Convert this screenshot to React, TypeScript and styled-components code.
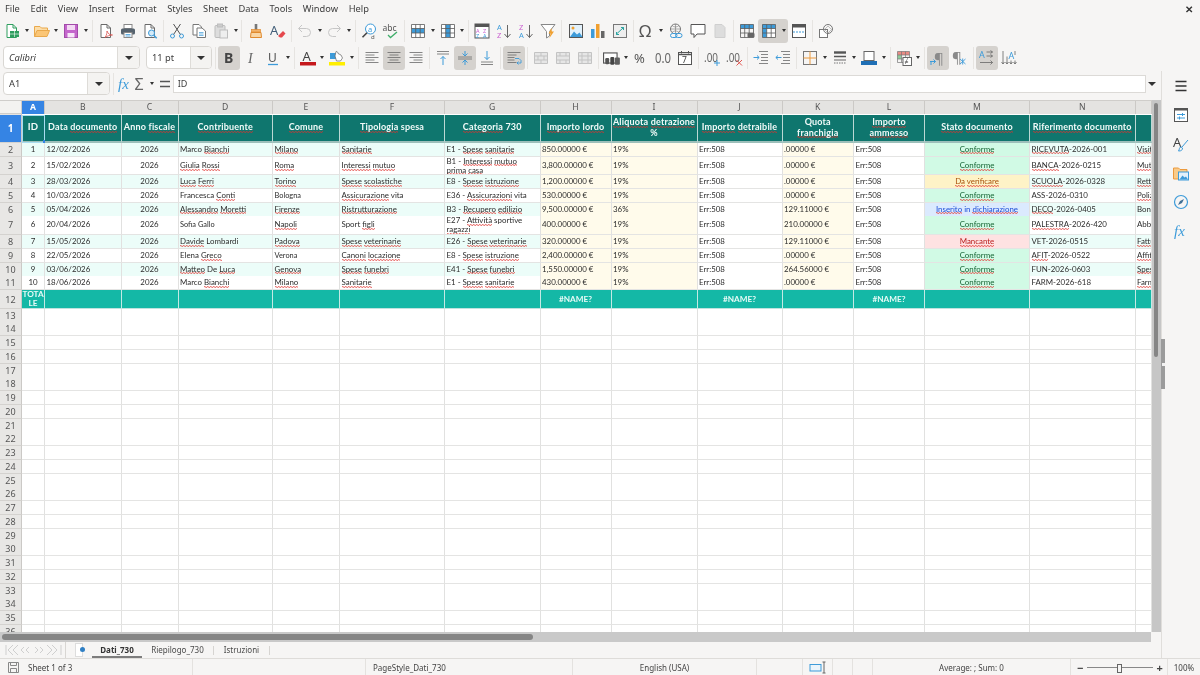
import React from "react";
import styled, { createGlobalStyle } from "styled-components";

const UI = '"Noto Sans", "Open Sans", sans-serif';
const GR = "#6a6a6a";
const BL = "#3d9bd9";
const OR = "#ec9a3c";
const WAVE = `url("data:image/svg+xml,%3Csvg xmlns='http://www.w3.org/2000/svg' width='3' height='2'%3E%3Cpath d='M0 1Q.75 0 1.5 1T3 1' fill='none' stroke='%23e0302a' stroke-width='.9'/%3E%3C/svg%3E")`;

const Global = createGlobalStyle`
  html, body { margin: 0; height: 100%; overflow: hidden; background: #f6f5f4; }
  #root { height: 675px; }
  * { box-sizing: border-box; }
`;

const S = ({ children, size = 16 }: { children: React.ReactNode; size?: number }) => (
  <svg width={size} height={size} viewBox="0 0 16 16" fill="none" overflow="visible">
    {children}
  </svg>
);

const T = ({ x, y, s, c = GR, w = 400, f = UI, i = false, len, children }: {
  x: number; y: number; s: number; c?: string; w?: number; f?: string; i?: boolean; len?: number; children: React.ReactNode;
}) => (
  <text x={x} y={y} fontSize={s} fill={c} fontWeight={w} fontFamily={f} fontStyle={i ? "italic" : "normal"} textLength={len} lengthAdjust={len ? "spacingAndGlyphs" : undefined}>
    {children}
  </text>
);

const Doc = ({ c = "#6a6a6a" }: { c?: string }) => (
  <>
    <path d="M3 1.5h6l3.5 3.5v9.5H3z" fill="#fff" stroke={c} />
    <path d="M9 1.5V5h3.5" stroke={c} />
  </>
);

const Table = ({ c = "#5a5a5a" }: { c?: string }) => (
  <path d="M1.5 1.5h13v13h-13zM1.5 5.5h13M1.5 10h13M5.7 1.5v13M10.2 1.5v13" stroke={c} strokeWidth=".8" />
);

const icons: Record<string, React.ReactNode> = {
  new: <S><Doc c="#2f9e5f" /><rect x="6" y="8" width="9" height="6" fill="#2f9e5f" /><path d="M6 11h9M10.5 8v6" stroke="#fff" strokeWidth=".6" /></S>,
  open: <S><path d="M.5 13.5V3.5h5.5L7.5 5h6v3" fill="#fcdda8" stroke="#e9a94c" /><path d="M.5 13.5 3 7.5h12.5l-2.5 6z" fill="#fbc676" stroke="#e9a94c" /></S>,
  save: <S><rect x="1.5" y="1.5" width="13" height="13" fill="#c466cc" stroke="#a24aa9" /><rect x="4" y="2" width="8" height="5" fill="#f3d9f4" /><rect x="4.5" y="10" width="7" height="4.5" fill="#f7e7f8" /></S>,
  pdf: <S><Doc /><path d="M7 14.5c2-3 2-5 2-6.500 1 3 3 4 5.500 4-2.500 0-5.500 1-7.500 2.500z" stroke="#d9534f" strokeWidth=".8" /></S>,
  print: <S><rect x="4" y="1.500" width="8" height="4" fill="#fff" stroke="#888" /><rect x="1" y="5.500" width="14" height="6" rx="1.500" fill="#56636e" /><rect x="4" y="9.500" width="8" height="5" fill="#fff" stroke="#888" /><path d="M5.500 11.500h5M5.500 13h5" stroke={BL} strokeWidth=".8" /></S>,
  preview: <S><Doc /><circle cx="9.500" cy="10" r="3" fill="#d6ebf8" stroke={BL} /><path d="m11.700 12.200 3 3" stroke={BL} strokeWidth="1.500" /></S>,
  cut: <S><circle cx="3.500" cy="13" r="2" stroke={BL} /><circle cx="12.500" cy="13" r="2" stroke={BL} /><path d="M4.700 11.300 11.500 1M11.300 11.300 4.500 1" stroke="#555" /></S>,
  copy: <S><path d="M2 1.500h6L10.500 4v8H2z" fill="#fff" stroke="#777" /><path d="M6 5h5l3.500 3v6.500H6z" fill="#fff" stroke="#777" /><path d="M8 9.500h4.500M8 11h4.500M8 12.500h4.500" stroke={BL} strokeWidth=".7" /></S>,
  paste: <S><rect x="2" y="2.500" width="10" height="12" rx="1" fill="#ddd" stroke="#bdbdbd" /><rect x="4.500" y="1" width="5" height="3" fill="#ccc" stroke="#bdbdbd" /><rect x="7" y="7" width="7.500" height="8" fill="#eee" stroke="#bdbdbd" /></S>,
  clone: <S><rect x="6.700" y="1" width="2.600" height="6" fill="#777" /><rect x="3.500" y="6.500" width="9" height="2.500" fill="#f2b36b" stroke="#e08a2e" strokeWidth=".7" /><path d="M3 9.500h10l.5 5h-11z" fill="#f9d6a5" stroke="#e08a2e" /></S>,
  clear: <S><T x={0} y={12} s={13} c="#44607a">A</T><path d="m8 13 5-5 2.500 2.500-3.500 4h-2z" fill="#e5484d" /></S>,
  undo: <S><path d="M5 2 1.500 5.500 5 9M2 5.500h7.500a4 4 0 0 1 0 8H6" stroke="#c6c6c6" /></S>,
  redo: <S><path d="m11 2 3.500 3.500L11 9M14 5.500H6.500a4 4 0 0 0 0 8H10" stroke="#c6c6c6" /></S>,
  find: <S><circle cx="9.500" cy="6" r="5" fill="#fff" stroke={BL} /><T x={7} y={8.500} s={7.500} c={BL}>a</T><path d="M6 9.800 1.500 14.300" stroke="#444" strokeWidth="1.600" /><T x={10} y={15.500} s={6} c="#555">d</T></S>,
  spell: <S><T x={-.5} y={8} s={8.500} c="#555">abc</T><path d="m5 12 2.500 2.500L14 9" stroke="#3fae6a" strokeWidth="1.300" /></S>,
  rows: <S><rect x="1.500" y="1.500" width="13" height="13" fill="#fff" /><rect x="2" y="5.500" width="12" height="4.500" fill={BL} /><Table /></S>,
  cols: <S><rect x="1.500" y="1.500" width="13" height="13" fill="#fff" /><rect x="5.700" y="2" width="4.500" height="12" fill={BL} /><Table /></S>,
  sort: <S><rect x="1" y="1" width="14" height="14" fill="#fff" stroke="#555" /><rect x="1" y="1" width="14" height="3" fill="#555" /><T x={2} y={9.500} s={5.500} c="#c95fd0">A</T><T x={9} y={9.500} s={5.500} c="#c95fd0">Z</T><T x={2} y={14.500} s={5.500} c={BL}>Z</T><T x={9} y={14.500} s={5.500} c={BL}>A</T></S>,
  sortA: <S><T x={1} y={7} s={7.500} c={BL}>A</T><T x={1} y={15} s={7.500} c="#c95fd0">Z</T><path d="M11.500 2v12.500M8.500 11l3 3.500 3-3.500" stroke="#666" /></S>,
  sortZ: <S><T x={1} y={7} s={7.500} c="#c95fd0">Z</T><T x={1} y={15} s={7.500} c={BL}>A</T><path d="M11.500 2v12.500M8.500 11l3 3.500 3-3.500" stroke="#666" /></S>,
  filter: <S><path d="M1 1.500h14L9.500 8.500V13l-3 2V8.500z" stroke="#888" fill="#fff" /><path d="m11.500 5-3 5.500h2l-1 4.500 4.500-6.500h-2.200z" fill="#f0a030" /></S>,
  image: <S><rect x="1.500" y="1.500" width="13" height="13" fill="#e2f1fb" stroke="#555" /><circle cx="5" cy="5" r="1.500" fill="#f0a030" /><path d="m2 14 4-5.500 3 3 2.500-2 3 4.500z" fill={BL} /></S>,
  chart: <S><rect x="1" y="6" width="3.500" height="9" fill={BL} /><rect x="6" y="1" width="3.500" height="14" fill="#f0a030" /><rect x="11" y="8" width="3.500" height="7" fill="#666" /></S>,
  pivot: <S><rect x="1.500" y="1.500" width="13" height="13" fill="#eee" stroke="#777" /><path d="M4 11.500 11.500 4.500M9 4.500h2.500V7M4.500 9v2.500H7" stroke="#2aa3a0" /></S>,
  omega: <S><T x={0} y={14} s={17} c="#555">Ω</T></S>,
  link: <S><circle cx="7.500" cy="6" r="5" stroke="#777" /><path d="M2.500 6h10M7.500 1v10M4 2.500c2 2 5 2 7 0M4 9.500c2-2 5-2 7 0" stroke="#777" strokeWidth=".6" /><rect x="2.500" y="10.500" width="6.500" height="4" rx="2" stroke={BL} fill="#f6f5f4" /><rect x="7.500" y="10.500" width="6.500" height="4" rx="2" stroke={BL} /></S>,
  comment: <S><path d="M1 1.500h14V11H7l-3 3.500V11H1z" fill="#fff" stroke="#555" /></S>,
  hf: <S><path d="M3 1.500h7l3 3v10H3z" fill="#ddd" stroke="#cfcfcf" /></S>,
  area: <S><rect x="1.500" y="1.500" width="13" height="4" fill={BL} /><Table /><rect x="8.500" y="10" width="7" height="4.500" rx="1" fill="#666" /></S>,
  freeze: <S><rect x="1.500" y="1.500" width="13" height="13" fill="#fff" /><rect x="1.500" y="1.500" width="13" height="4" fill={BL} /><rect x="1.500" y="1.500" width="4.200" height="13" fill={BL} /><Table /></S>,
  split: <S><rect x="1.500" y="1.500" width="13" height="13" fill="#fff" stroke="#555" /><rect x="1.500" y="1.500" width="13" height="3" fill="#555" /><path d="M2 9h12" stroke={BL} strokeDasharray="2 1" /></S>,
  shapes: <S><rect x="1.500" y="6.500" width="8" height="8" stroke="#777" fill="#fff" /><circle cx="10" cy="6" r="4.500" stroke="#777" /><path d="m10 3 3.500 3.500L10 10 6.500 6.500z" stroke="#999" strokeWidth=".6" /></S>,
  bold: <S><T x={3} y={13} s={14} c="#444" w={700}>B</T></S>,
  italic: <S><T x={5} y={13} s={14} c="#666" f='"Liberation Serif", serif' i>I</T></S>,
  under: <S><T x={3} y={11.500} s={12} c="#555">U</T><path d="M3 14.500h10" stroke={BL} strokeWidth="1.300" /></S>,
  color: <S><T x={2.500} y={11} s={13} c="#444">A</T><rect x="0" y="12" width="16" height="3.500" fill="#c5181c" /></S>,
  hilite: <S><rect x="1" y="3" width="6.500" height="6" fill={BL} /><path d="M7 1.500c1.500 0 2 1 2 2l3 1.500 1.500 3-2 3H7.500L6 6z" fill="#fff" stroke="#666" strokeWidth=".7" /><rect x="0" y="12" width="16" height="3.500" fill="#ffee00" /></S>,
  alignL: <S><path d="M1.500 2.500h13M1.500 5h9M1.500 7.500h13M1.500 10h9M1.500 12.500h13" stroke={GR} strokeWidth=".8" /></S>,
  alignC: <S><path d="M1.500 2.500h13M3.500 5h9M1.500 7.500h13M3.500 10h9M1.500 12.500h13" stroke={GR} strokeWidth=".8" /></S>,
  alignR: <S><path d="M1.500 2.500h13M5.500 5h9M1.500 7.500h13M5.500 10h9M1.500 12.500h13" stroke={GR} strokeWidth=".8" /></S>,
  top: <S><path d="M2 1.500h12M2 4h12" stroke={GR} strokeWidth=".8" /><path d="M8 15V6.500M5.500 9 8 6.500 10.500 9" stroke={BL} /></S>,
  mid: <S><path d="M1 7h14M1 9h14" stroke={GR} strokeWidth=".8" /><path d="M8 1v4.500M5.500 3.500 8 6l2.500-2.500M8 15v-4.500M5.500 12.500 8 10l2.500 2.500" stroke={BL} /></S>,
  bottom: <S><path d="M2 12h12M2 14.500h12" stroke={GR} strokeWidth=".8" /><path d="M8 1v8.500M5.500 7 8 9.500 10.500 7" stroke={BL} /></S>,
  wrap: <S><path d="M1.500 2.500h13M1.500 5h9M1.500 7.500h7M1.500 10h7M1.500 12.500h9" stroke={GR} strokeWidth=".8" /><path d="M9 8.500h4l2 2v2.500h-4M12.500 11.500 11 13l1.500 1.500" stroke={BL} strokeWidth=".9" /></S>,
  merge1: <S><path d="M1.500 2.500h13v11h-13zM1.500 6h13M1.500 10h13M8 2.500v3.500M5 6v4M11 6v4M8 10v3.500" stroke="#c3c3c3" fill="#e6e6e6" /></S>,
  merge2: <S><path d="M1.500 2.500h13v11h-13zM1.500 6h13M1.500 10h13M5 2.500v3.500M11 2.500v3.500M5 10v3.500M11 10v3.500" stroke="#c3c3c3" fill="#e6e6e6" /></S>,
  merge3: <S><path d="M1.500 2.500h13v11h-13zM1.500 6h13M1.500 10h13M5 2.500v11M11 2.500v11" stroke="#c3c3c3" fill="#e6e6e6" /></S>,
  money: <S size={18}><rect x=".5" y="3.500" width="12" height="9" stroke="#555" fill="#fff" /><rect x="2" y="8" width="3.500" height="5.500" fill="#555" rx="1" /><rect x="6.500" y="7" width="3.500" height="7" fill="#444" rx="1" /><rect x="10.500" y="7.500" width="4.500" height="6.500" fill="#5f5f5f" rx="1" /></S>,
  percent: <S><T x={1} y={13} s={13} c="#555">%</T></S>,
  number: <S><T x={0} y={13} s={14} c="#666" len={16}>0.0</T></S>,
  date: <S><rect x="1.500" y="2.500" width="13" height="12" fill="#fff" stroke="#555" /><path d="M1.500 4.500h13" stroke="#555" strokeWidth="1.500" /><path d="M4.500 1v2.500M11.500 1v2.500" stroke="#555" /><T x={5} y={13} s={8.500} c="#444">7</T></S>,
  addDec: <S><T x={0} y={12} s={13} c="#666" len={14}>.00</T><path d="M13 10v6M10 13h6" stroke={BL} /></S>,
  delDec: <S><T x={0} y={12} s={13} c="#666" len={14}>.00</T><path d="m10.500 10 5.500 5.500M16 10l-5.500 5.500" stroke="#e2544f" /></S>,
  indInc: <S><path d="M6 1.500h9M8 4.500h7M8 7.500h7M8 10.500h7M6 13.500h9" stroke={GR} strokeWidth=".8" /><path d="M.5 7.500h5.500M4 5.500l2.200 2-2.200 2" stroke={BL} /></S>,
  indDec: <S><path d="M6 1.500h9M8 4.500h7M8 7.500h7M8 10.500h7M6 13.500h9" stroke={GR} strokeWidth=".8" /><path d="M6.500 7.500H1M3 5.500l-2.200 2 2.200 2" stroke={BL} /></S>,
  borders: <S><rect x="1.500" y="1.500" width="13" height="13" stroke="#777" /><path d="M8 1.500v13M1.500 8h13" stroke={OR} /></S>,
  bstyle: <S><path d="M2 2.500h12" stroke="#555" strokeWidth="2.400" /><path d="M2 6.500h12" stroke="#555" strokeWidth="1.500" /><path d="M2 10h12" stroke="#666" /><path d="M2 13h12" stroke="#777" strokeDasharray="1.500 1" /></S>,
  bcolor: <S><rect x="3" y="1.500" width="10" height="9" fill="#fff" stroke="#666" /><rect x="0" y="11" width="16" height="4" fill="#1f6fb5" /></S>,
  cond: <S><rect x="1.500" y="1.500" width="12" height="3.500" fill="#e98b84" /><rect x="1.500" y="5" width="4" height="4" fill="#8fcb9b" /><path d="M1.500 1.500h12v11h-12zM1.500 5h12M1.500 9h12M5.500 1.500v11M9.500 1.500v11" stroke="#777" strokeWidth=".7" /><rect x="7" y="7.500" width="8.500" height="8" fill="#fff" stroke="#666" /><T x={8.500} y={14} s={7} c="#444">≠</T></S>,
  paraL: <S><T x={4} y={13.500} s={15} c="#8a8a8a">¶</T><path d="M0 11.500h5.500M3.500 9.500l2 2-2 2M1 15v-3" stroke={BL} /></S>,
  paraR: <S><T x={0} y={13} s={15} c="#8a8a8a">¶</T><path d="m8 9 5.500 5M13.500 9 8 14M10.700 8.500v6" stroke={BL} strokeWidth=".9" /></S>,
  textH: <S><T x={0} y={8} s={9} c={BL}>A</T><path d="M7.500 2h6M11.500.5l2 1.500-2 1.500M7.500 6h6M11.500 4.500l2 1.500-2 1.500M1 12.500h12.500M11.500 10.500l2 2-2 2" stroke="#666" strokeWidth=".8" /></S>,
  textV: <S><T x={7.500} y={9} s={9} c={BL}>A</T><path d="M2 1v13M.5 12 2 14l1.500-2M6 6.500V14M4.500 12 6 14l1.500-2M10 10.500V14M8.500 12l1.500 2 1.500-2M14 10.500V14M12.500 12l1.500 2 1.500-2M14 1v4" stroke="#666" strokeWidth=".8" /></S>,
  menu: <S><path d="M2.500 3.500h11M2.500 8h11M2.500 12.500h11" stroke="#333" strokeWidth="1.300" /></S>,
  props: <S><rect x="1.500" y="1.500" width="13" height="13" fill="#fff" stroke="#555" /><rect x="1.500" y="1.500" width="13" height="2" fill="#555" /><path d="M4 7.500h8M4 11h8" stroke={BL} /><path d="M9.500 6v3M6.500 9.500v3" stroke={BL} /></S>,
  styles: <S><T x={0} y={11} s={13} c="#444">A</T><path d="M15 4 9 11M5.500 15c3 0 4-1 4-3l-1.500-1c-2 0-1.500 3-2.500 4z" stroke={BL} /></S>,
  gallery: <S><path d="M.5 14V3h5L7 4.500h7V14z" fill="#f9cb8a" stroke={OR} /><rect x="5.500" y="7" width="10" height="8" fill="#e2f1fb" stroke={BL} /><path d="m6.500 14.500 3-4 2 2 1.500-1 2 3z" fill={BL} /></S>,
  nav: <S><circle cx="8" cy="8" r="6.500" stroke={BL} strokeWidth="1.200" /><path d="M11 5 9 9 5 11 7 7z" fill="#3f6f96" /></S>,
  fx: <S><T x={1} y={12.500} s={15} c={BL} f='"Liberation Serif", serif' i>fx</T></S>,
  sigma: <S><T x={1.500} y={14} s={16} c="#666">Σ</T></S>,
  equal: <S><path d="M3 5.500h10M3 10.500h10" stroke="#555" strokeWidth="1.300" /></S>,
};

const App_ = styled.div`
  width: 1200px;
  height: 675px;
  display: flex;
  flex-direction: column;
  overflow: hidden;
  background: #f6f5f4;
  font-family: ${UI};
  color: #3d3d3d;
  filter: blur(0.35px);
`;

const MenuBar = styled.div`
  height: 17px;
  flex: none;
  display: flex;
  align-items: center;
  justify-content: space-between;
  padding: 0 7px 0 5px;
  font-size: 9.3px;
`;

const MenuList = styled.div`
  display: flex;
  gap: 10.6px;
`;

const Close = styled.span`
  font-size: 10px;
  font-weight: 700;
  color: #333;
`;

const Toolbar = styled.div<{ $h: number }>`
  height: ${(p) => p.$h}px;
  flex: none;
  display: flex;
  align-items: center;
  padding-left: 1px;
`;

const Group = styled.span<{ $on?: boolean }>`
  display: flex;
  align-items: center;
  height: 24px;
  border-radius: 3px;
  background: ${(p) => (p.$on ? "#d5d2ce" : "transparent")};
`;

const Tool = styled.span<{ $w?: number }>`
  width: ${(p) => p.$w ?? 22}px;
  height: 24px;
  display: flex;
  align-items: center;
  justify-content: center;
  flex: none;
`;

const Drop = styled.span`
  width: 7.5px;
  height: 24px;
  display: flex;
  align-items: center;
  justify-content: center;
  flex: none;
  &::after {
    content: "";
    border-left: 2.5px solid transparent;
    border-right: 2.5px solid transparent;
    border-top: 3px solid #333;
  }
`;

const BigDrop = styled(Drop)`
  width: 12px;
  &::after {
    border-left-width: 4px;
    border-right-width: 4px;
    border-top-width: 4px;
  }
`;

const Sep = styled.span<{ $tight?: boolean }>`
  width: 1px;
  height: 22px;
  margin: 0 ${(p) => (p.$tight ? 2 : 2.1)}px;
  background: #e6e4e1;
  flex: none;
`;

const Combo = styled.div<{ $w: number; $inner: number; $ml?: number }>`
  width: ${(p) => p.$w}px;
  height: 23px;
  margin-left: ${(p) => p.$ml ?? 0}px;
  margin-right: 1px;
  flex: none;
  display: grid;
  grid-template-columns: ${(p) => p.$inner}px 1fr;
  border: 1px solid #d9d7d3;
  border-radius: 4px;
  background: #fff;
  overflow: hidden;
`;

const ComboText = styled.span<{ $i?: boolean }>`
  align-self: center;
  padding-left: 5px;
  font-size: 9.3px;
  font-style: ${(p) => (p.$i ? "italic" : "normal")};
`;

const ComboBtn = styled(BigDrop)`
  width: auto;
  height: 100%;
  border-left: 1px solid #dedcd8;
  background: #f4f3f1;
`;

const Work = styled.div`
  flex: 1;
  display: flex;
  min-height: 0;
`;

const Main = styled.div`
  width: 1161px;
  flex: none;
  display: flex;
  flex-direction: column;
`;

const FormulaBar = styled.div`
  height: 28.5px;
  flex: none;
  display: flex;
  align-items: center;
  padding-left: 3px;
  padding-bottom: 3.5px;
`;

const FormulaInput = styled.div`
  width: 973px;
  height: 18px;
  margin-left: -1px;
  flex: none;
  display: flex;
  align-items: center;
  padding-left: 4px;
  font-size: 9px;
  background: #fff;
  border: 1px solid #dcdad7;
`;

const SheetArea = styled.div`
  flex: 1;
  min-height: 0;
  display: flex;
`;

const Grid = styled.div`
  width: 1152px;
  flex: none;
  position: relative;
  overflow: hidden;
  background: #fff;
  font-family: Lato, "Liberation Sans", sans-serif;
  border-top: 1px solid #cfcdca;
`;

const COLS = "22px 23px 76.5px 57px 94.5px 67px 105px 95.5px 71px 86px 85px 71.5px 71px 105px 105.5px 16.5px";

const Row = styled.div<{ $h: number }>`
  height: ${(p) => p.$h}px;
  display: grid;
  grid-template-columns: ${COLS};
`;

const Corner = styled.div`
  background: #f3f2f0;
  border-right: 1px solid #cfcdca;
  border-bottom: 1px solid #cfcdca;
`;

const ColHead = styled.div<{ $on?: boolean }>`
  display: flex;
  align-items: center;
  justify-content: center;
  font-family: ${UI};
  font-size: 8.6px;
  font-weight: ${(p) => (p.$on ? 700 : 400)};
  color: ${(p) => (p.$on ? "#fff" : "#555")};
  background: ${(p) => (p.$on ? "#3584e4" : "#e4e3e1")};
  border-right: 1px solid #cbc9c6;
`;

const RowHead = styled.div<{ $on?: boolean }>`
  display: flex;
  align-items: center;
  justify-content: center;
  font-family: ${UI};
  font-size: ${(p) => (p.$on ? 10 : 9)}px;
  font-weight: ${(p) => (p.$on ? 700 : 400)};
  color: ${(p) => (p.$on ? "#fff" : "#555")};
  background: ${(p) => (p.$on ? "#3584e4" : "#e8e7e5")};
  border-right: 1px solid #cbc9c6;
  border-bottom: 1px solid #d4d2cf;
`;

const HeadCell = styled.div<{ $sel?: boolean }>`
  position: relative;
  display: flex;
  align-items: center;
  justify-content: center;
  text-align: center;
  white-space: pre-line;
  padding: 0 1px;
  font-size: ${(p) => (p.$sel ? 9.6 : 9)}px;
  line-height: 10.5px;
  font-weight: 700;
  letter-spacing: 0.18px;
  color: #f2fbf9;
  background: #0f766e;
  border-right: 1px solid #bcd8d4;
  border-bottom: 2px solid #9dbfba;
  ${(p) => p.$sel && "outline: 1px solid #a9dcf0; outline-offset: -1px;"}
`;

const Handle = styled.span`
  position: absolute;
  right: -2px;
  bottom: -2px;
  width: 3px;
  height: 3px;
  background: #3584e4;
`;

const Cell = styled.div<{ $bg?: string; $fg?: string; $center?: boolean; $small?: boolean }>`
  display: flex;
  align-items: center;
  justify-content: ${(p) => (p.$center ? "center" : "flex-start")};
  text-align: ${(p) => (p.$center ? "center" : "left")};
  padding: 0 1.5px;
  overflow: hidden;
  white-space: ${(p) => (p.$center ? "normal" : "nowrap")};
  font-size: ${(p) => (p.$small ? 7.4 : 7.9)}px;
  line-height: 9px;
  color: ${(p) => p.$fg ?? "#2c2c2c"};
  background: ${(p) => p.$bg ?? "#fff"};
  border-right: 1px solid #e1e1e0;
  border-bottom: 1px solid #e4e4e3;
`;

const WrapCell = styled(Cell)`
  white-space: normal;
`;

const Spell = styled.span`
  padding-bottom: 0.6px;
  background: ${WAVE} repeat-x 0 100% / 3px 2px;
`;

const TotalCell = styled.div`
  display: flex;
  align-items: center;
  justify-content: center;
  text-align: center;
  word-break: break-all;
  font-size: 8.2px;
  line-height: 8.600px;
  font-weight: 700;
  color: #e8fbf7;
  background: #14b8a6;
  border-right: 1px solid #c5e9e4;
  border-bottom: 1px solid #bfe3de;
`;

const VScroll = styled.div`
  width: 9px;
  flex: none;
  padding: 3px 3px 0 1.500px;
  background: #c6c6c6;
`;

const VThumb = styled.div`
  height: 254px;
  border-radius: 2px;
  background: #858585;
`;

const HScroll = styled.div`
  height: 10px;
  flex: none;
  display: flex;
  align-items: center;
  padding: 0 2px;
  background: #c9c9c9;
  margin-right: 10px;
`;

const HThumb = styled.div`
  width: 531px;
  height: 6px;
  border-radius: 3px;
  background: #858585;
`;

const TabBar = styled.div`
  height: 16px;
  flex: none;
  display: flex;
  align-items: stretch;
  font-size: 8px;
`;

const TabNav = styled.div`
  width: 61px;
  margin-left: 5px;
  display: flex;
  align-items: center;
  color: #c8c8c8;
  flex: none;
  border-right: 1px solid #d8d6d3;
  margin-right: 9px;
`;

const NewSheet = styled.span`
  position: relative;
  width: 8px;
  height: 14px;
  align-self: center;
  flex: none;
  margin-right: 9px;
  background: #fff;
  border: 1px solid #ddd;
  &::after {
    content: "";
    position: absolute;
    right: -3px;
    top: 3px;
    width: 5px;
    height: 5px;
    border-radius: 50%;
    background: #2f7fc4;
  }
`;

const Tab = styled.div<{ $on?: boolean; $w: number }>`
  width: ${(p) => p.$w}px;
  display: flex;
  align-items: center;
  justify-content: center;
  flex: none;
  font-weight: ${(p) => (p.$on ? 700 : 400)};
  color: ${(p) => (p.$on ? "#333" : "#4a4a4a")};
  border-bottom: 2px solid ${(p) => (p.$on ? "#7d7d7d" : "transparent")};
`;

const TabSep = styled.span`
  width: 1px;
  height: 9px;
  align-self: center;
  background: #d6d4d1;
  flex: none;
`;

const Sidebar = styled.div`
  width: 39px;
  flex: none;
  position: relative;
  border-left: 1px solid #e0dedb;
`;

const DeckItem = styled.div`
  height: 29px;
  display: flex;
  align-items: center;
  justify-content: center;
`;

const SideHandle = styled.span`
  position: absolute;
  left: -1px;
  top: 268px;
  width: 4px;
  height: 50px;
  background: #9b9b9b;
  &::after {
    content: "";
    position: absolute;
    left: 1px;
    top: 24px;
    width: 3px;
    height: 3px;
    background: #f2f2f2;
  }
`;

const Status = styled.div`
  height: 17px;
  flex: none;
  display: flex;
  font-size: 8px;
  color: #444;
  border-top: 1px solid #dedcd9;
`;

const StatusCell = styled.div<{ $w: number; $left?: boolean; $last?: boolean }>`
  width: ${(p) => p.$w}px;
  flex: none;
  display: flex;
  align-items: center;
  justify-content: ${(p) => (p.$left ? "flex-start" : "center")};
  gap: 8px;
  padding-left: ${(p) => (p.$left ? 7 : 0)}px;
  border-right: ${(p) => (p.$last ? 0 : 1)}px solid #e4e2df;
`;

const Zoom = styled.div`
  width: 97px;
  padding-left: 6px;
  display: flex;
  align-items: center;
  gap: 3.5px;
  font-size: 11px;
  font-weight: 700;
`;

const ZoomTrack = styled.span`
  position: relative;
  width: 66px;
  height: 1px;
  background: #888;
  &::after {
    content: "";
    position: absolute;
    left: 30px;
    top: -3px;
    width: 3px;
    height: 7px;
    background: #f6f5f4;
    border: 1px solid #666;
  }
`;

const SPELL_RE = /(~[^~]+~)/;

const Rich = ({ text }: { text: string }) => (
  <>
    {text.split(SPELL_RE).map((part, i) =>
      part.startsWith("~") ? <Spell key={i}>{part.slice(1, -1)}</Spell> : <span key={i}>{part}</span>
    )}
  </>
);

const renderTools = (list: string[], tight = false) =>
  list.map((tok, i) => {
    if (tok === "|") return <Sep key={i} $tight={tight} />;
    const name = tok.replace(/[+!]/g, "");
    return (
      <Group key={i} $on={tok.includes("!")}>
        <Tool>{icons[name]}</Tool>
        {tok.includes("+") && <Drop />}
      </Group>
    );
  });

const TOOLS_1 = ["new+", "open+", "save+", "|", "pdf", "print", "preview", "|", "cut", "copy", "paste+", "|", "clone", "clear", "|", "undo+", "redo+", "|", "find", "spell", "|", "rows+", "cols+", "|", "sort", "sortA", "sortZ", "filter", "|", "image", "chart", "pivot", "|", "omega+", "link", "comment", "hf", "|", "area", "freeze+!", "split", "|", "shapes"];
const TOOLS_2 = ["bold!", "italic", "under+", "|", "color+", "hilite+", "|", "alignL", "alignC!", "alignR", "|", "top", "mid!", "bottom", "|", "wrap!", "|", "merge1", "merge2", "merge3", "|", "money+", "percent", "number", "date", "|", "addDec", "delDec", "|", "indInc", "indDec", "|", "borders+", "bstyle+", "bcolor+", "|", "cond+", "|", "paraL!", "paraR", "|", "textH!", "textV"];

const COL_NAMES = "A B C D E F G H I J K L M N".split(" ");
const HEADERS = ["ID", "Data ~documento~", "Anno ~fiscale~", "~Contribuente~", "~Comune~", "~Tipologia~ spesa", "~Categoria~ 730", "~Importo~ ~lordo~", "~Aliquota~ ~detrazione~\n%", "~Importo~ ~detraibile~", "Quota\n~franchigia~", "~Importo~\n~ammesso~", "~Stato~ ~documento~", "~Riferimento~ ~documento~", ""];

type Data = { h: number; cells: string[] };
const RAW: Data[] = [
  { h: 14.5, cells: ["12/02/2026", "Marco ~Bianchi~", "~Milano~", "~Sanitarie~", "E1 - ~Spese~ ~sanitarie~", "850.00000 €", "19%", ".00000 €", "Conforme", "~RICEVUTA~-2026-001", "~Visita~"] },
  { h: 18, cells: ["15/02/2026", "~Giulia~ ~Rossi~", "~Roma~", "~Interessi~ ~mutuo~", "B1 - ~Interessi~ ~mutuo~ ~prima~ ~casa~", "3,800.00000 €", "19%", ".00000 €", "Conforme", "~BANCA~-2026-0215", "~Mutuo~"] },
  { h: 14, cells: ["28/03/2026", "~Luca~ ~Ferri~", "~Torino~", "~Spese~ ~scolastiche~", "E8 - ~Spese~ ~istruzione~", "1,200.00000 €", "19%", ".00000 €", "Da verificare", "~SCUOLA~-2026-0328", "~Retta~"] },
  { h: 13.6, cells: ["10/03/2026", "Francesca ~Conti~", "^Bologna", "~Assicurazione~ vita", "E36 - ~Assicurazioni~ vita", "530.00000 €", "19%", ".00000 €", "Conforme", "ASS-2026-0310", "~Polizza~"] },
  { h: 13.4, cells: ["05/04/2026", "~Alessandro~ ~Moretti~", "~Firenze~", "~Ristrutturazione~", "B3 - ~Recupero~ ~edilizio~", "9,500.00000 €", "36%", "129.11000 €", "Inserito in dichiarazione", "~DECO~-2026-0405", "Bonifico"] },
  { h: 19, cells: ["20/04/2026", "^Sofia Gallo", "~Napoli~", "Sport ~figli~", "E27 - ~Attività~ sportive ~ragazzi~", "400.00000 €", "19%", "210.00000 €", "Conforme", "~PALESTRA~-2026-420", "Abbonamento"] },
  { h: 14, cells: ["15/05/2026", "~Davide~ Lombardi", "~Padova~", "~Spese~ ~veterinarie~", "E26 - ~Spese~ ~veterinarie~", "320.00000 €", "19%", "129.11000 €", "Mancante", "VET-2026-0515", "~Fattura~"] },
  { h: 13.7, cells: ["22/05/2026", "Elena ~Greco~", "^Verona", "~Canoni~ ~locazione~", "E8 - ~Spese~ ~istruzione~", "2,400.00000 €", "19%", ".00000 €", "Conforme", "~AFIT~-2026-0522", "~Affitto~"] },
  { h: 13.7, cells: ["03/06/2026", "~Matteo~ De ~Luca~", "~Genova~", "~Spese~ ~funebri~", "E41 - ~Spese~ ~funebri~", "1,550.00000 €", "19%", "264.56000 €", "Conforme", "FUN-2026-0603", "~Spese~"] },
  { h: 14, cells: ["18/06/2026", "Marco ~Bianchi~", "~Milano~", "~Sanitarie~", "E1 - ~Spese~ ~sanitarie~", "430.00000 €", "19%", ".00000 €", "Conforme", "FARM-2026-618", "~Farmaci~"] },
];

const STATE: Record<string, { bg: string; fg: string; text: string }> = {
  Conforme: { bg: "#d1fae5", fg: "#166534", text: "~Conforme~" },
  "Da verificare": { bg: "#fef3c7", fg: "#a8500a", text: "~Da~ ~verificare~" },
  "Inserito in dichiarazione": { bg: "#dbeafe", fg: "#1d4ed8", text: "~Inserito~ in ~dichiarazione~" },
  Mancante: { bg: "#fee2e2", fg: "#b91c1c", text: "~Mancante~" },
};

const YELLOW = "#fffbeb";
const MINT = "#ecfdf9";
const EMPTY_ROWS = Array.from({ length: 24 }, (_, i) => i + 13);

const Text = ({ value, bg }: { value: string; bg: string }) => {
  const small = value.startsWith("^");
  return (
    <Cell $bg={bg} $small={small}>
      <span><Rich text={small ? value.slice(1) : value} /></span>
    </Cell>
  );
};

const DataRow = ({ row, index }: { row: Data; index: number }) => {
  const [date, name, town, kind, cat, gross, rate, quota, state, ref, note] = row.cells;
  const bg = index % 2 === 0 ? MINT : "#fff";
  const st = STATE[state];
  return (
    <Row $h={row.h}>
      <RowHead>{index + 2}</RowHead>
      <Cell $bg={bg} $center>{index + 1}</Cell>
      <Text value={date} bg={bg} />
      <Cell $bg={bg} $center>2026</Cell>
      <Text value={name} bg={bg} />
      <Text value={town} bg={bg} />
      <Text value={kind} bg={bg} />
      <WrapCell $bg={bg}><span><Rich text={cat} /></span></WrapCell>
      <Cell $bg={YELLOW}>{gross}</Cell>
      <Cell $bg={YELLOW}>{rate}</Cell>
      <Cell>Err:508</Cell>
      <Cell $bg={YELLOW}>{quota}</Cell>
      <Cell>Err:508</Cell>
      <Cell $bg={st.bg} $fg={st.fg} $center><span><Rich text={st.text} /></span></Cell>
      <Text value={ref} bg={bg} />
      <Text value={note} bg={bg} />
    </Row>
  );
};

export default function App() {
  return (
    <App_>
      <Global />
      <MenuBar>
        <MenuList>
          {["File", "Edit", "View", "Insert", "Format", "Styles", "Sheet", "Data", "Tools", "Window", "Help"].map((m) => (
            <span key={m}>{m}</span>
          ))}
        </MenuList>
        <Close>✕</Close>
      </MenuBar>
      <Toolbar $h={27}>{renderTools(TOOLS_1)}</Toolbar>
      <Toolbar $h={27}>
        <Combo $w={137} $inner={113} $ml={2}>
          <ComboText $i>Calibri</ComboText>
          <ComboBtn />
        </Combo>
        <Combo $w={66} $inner={43} $ml={5}>
          <ComboText>11 pt</ComboText>
          <ComboBtn />
        </Combo>
        <Sep $tight />
        {renderTools(TOOLS_2, true)}
      </Toolbar>
      <Work>
        <Main>
          <FormulaBar>
            <Combo $w={107} $inner={83}>
              <ComboText>A1</ComboText>
              <ComboBtn />
            </Combo>
            <Sep />
            <Tool $w={17}>{icons.fx}</Tool>
            <Tool $w={15}>{icons.sigma}</Tool>
            <Drop />
            <Tool $w={18}>{icons.equal}</Tool>
            <FormulaInput>ID</FormulaInput>
            <BigDrop />
          </FormulaBar>
          <SheetArea>
            <Grid>
              <Row $h={14}>
                <Corner />
                {COL_NAMES.map((c) => (
                  <ColHead key={c} $on={c === "A"}>{c}</ColHead>
                ))}
                <ColHead />
                <ColHead />
              </Row>
              <Row $h={28}>
                <RowHead $on>1</RowHead>
                {HEADERS.map((h, i) => (
                  <HeadCell key={i} $sel={i === 0}>
                    <span><Rich text={h} /></span>
                    {i === 0 && <Handle />}
                  </HeadCell>
                ))}
              </Row>
              {RAW.map((row, i) => (
                <DataRow key={i} row={row} index={i} />
              ))}
              <Row $h={18.3}>
                <RowHead>12</RowHead>
                <TotalCell>TOTALE</TotalCell>
                {Array.from({ length: 14 }, (_, i) => (
                  <TotalCell key={i}>{i === 6 || i === 8 || i === 10 ? "#NAME?" : ""}</TotalCell>
                ))}
              </Row>
              {EMPTY_ROWS.map((n) => (
                <Row key={n} $h={13.76}>
                  <RowHead>{n}</RowHead>
                  {HEADERS.map((_, i) => (
                    <Cell key={i} />
                  ))}
                </Row>
              ))}
            </Grid>
            <VScroll>
              <VThumb />
            </VScroll>
          </SheetArea>
          <HScroll>
            <HThumb />
          </HScroll>
          <TabBar>
            <TabNav>
              <svg width="58" height="12" viewBox="0 0 58 12" fill="none" stroke="#cfcfcf">
                <path d="M1 1v10M8 1 3 6l5 5M13 1 8 6l5 5M19 3l-3 3 3 3M24 3l-3 3 3 3M30 3l3 3-3 3M35 3l3 3-3 3M42 1l5 5-5 5M47 1l5 5-5 5M56 1v10" />
              </svg>
            </TabNav>
            <NewSheet />
            <Tab $on $w={50}>Dati_730</Tab>
            <Tab $w={71}>Riepilogo_730</Tab>
            <TabSep />
            <Tab $w={55}>Istruzioni</Tab>
            <TabSep />
          </TabBar>
        </Main>
        <Sidebar>
          <DeckItem>{icons.menu}</DeckItem>
          <DeckItem>{icons.props}</DeckItem>
          <DeckItem>{icons.styles}</DeckItem>
          <DeckItem>{icons.gallery}</DeckItem>
          <DeckItem>{icons.nav}</DeckItem>
          <DeckItem>{icons.fx}</DeckItem>
          <SideHandle />
        </Sidebar>
      </Work>
      <Status>
        <StatusCell $w={193} $left>
          <svg width="13" height="13" viewBox="0 0 13 13" fill="none" stroke="#888">
            <path d="M1.500 1.500h10v10h-10zM3.500 1.500v3h6v-3M3.500 11.500v-4h6v4" />
          </svg>
          Sheet 1 of 3
        </StatusCell>
        <StatusCell $w={173} />
        <StatusCell $w={207} $left>PageStyle_Dati_730</StatusCell>
        <StatusCell $w={184}>English (USA)</StatusCell>
        <StatusCell $w={46} />
        <StatusCell $w={30}>
          <svg width="24" height="13" viewBox="0 0 24 13" fill="none">
            <rect x="4" y="3.500" width="11" height="6.500" stroke="#3d9bd9" fill="#eaf4fb" />
            <path d="M18 1v11M16.500 1h3M16.500 12h3" stroke="#666" />
          </svg>
        </StatusCell>
        <StatusCell $w={20} />
        <StatusCell $w={20} />
        <StatusCell $w={198}>Average: ; Sum: 0</StatusCell>
        <StatusCell $w={97}>
          <Zoom>
            <span>−</span>
            <ZoomTrack />
            <span>+</span>
          </Zoom>
        </StatusCell>
        <StatusCell $w={32} $last>100%</StatusCell>
      </Status>
    </App_>
  );
}
